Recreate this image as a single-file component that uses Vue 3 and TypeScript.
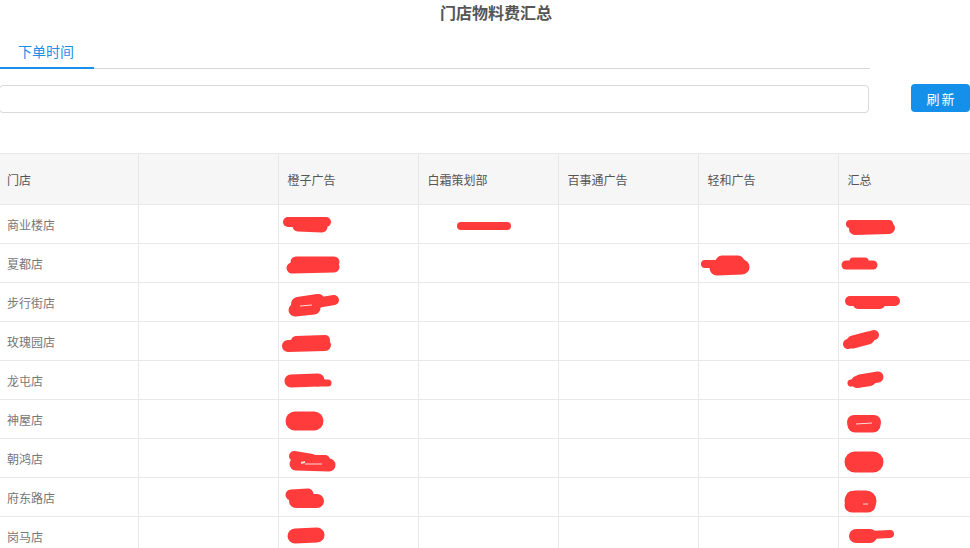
<script setup lang="ts">
interface Stroke { d: string; w: number }

const columns: string[] = ['门店', '', '橙子广告', '白霜策划部', '百事通广告', '轻和广告', '汇总']
const stores: string[] = ['商业楼店', '夏都店', '步行街店', '玫瑰园店', '龙屯店', '神屋店', '朝鸿店', '府东路店', '岗马店']
const blanks: string[] = ['', '', '', '', '', '']

const marks: Stroke[] = [
  { d: 'M288 222L326 222', w: 10 }, { d: 'M298 226L322 227', w: 11 },
  { d: 'M461 226L507 226', w: 8 },
  { d: 'M296 262L334 262', w: 11 }, { d: 'M292 268L334 267', w: 11 },
  { d: 'M705 264L716 264', w: 8 }, { d: 'M722 262L738 262', w: 13 }, { d: 'M717 268L742 267', w: 15 },
  { d: 'M295 310L314 308', w: 13 }, { d: 'M298 304L318 301', w: 14 }, { d: 'M316 303L334 300', w: 10 },
  { d: 'M288 346L325 345', w: 12 }, { d: 'M296 341L325 340', w: 10 },
  { d: 'M291 381L318 380', w: 13 }, { d: 'M318 383L328 383', w: 7 },
  { d: 'M295 421L314 421', w: 19 }, { d: 'M298 417L312 417', w: 10 },
  { d: 'M294 456L312 459', w: 10 }, { d: 'M296 464L329 465', w: 13 }, { d: 'M300 460L325 460', w: 10 },
  { d: 'M291 495L308 494', w: 11 }, { d: 'M296 501L317 501', w: 14 },
  { d: 'M295 536L317 535', w: 15 },
  { d: 'M850 224L889 224', w: 8 }, { d: 'M855 229L889 228', w: 12 },
  { d: 'M846 265L873 265', w: 9 }, { d: 'M853 261L865 261', w: 7 },
  { d: 'M850 301L895 301', w: 10 }, { d: 'M858 304L880 304', w: 10 },
  { d: 'M848 344L874 335', w: 10 }, { d: 'M853 342L868 338', w: 13 },
  { d: 'M851 383L860 382', w: 7 }, { d: 'M860 380L878 377', w: 11 }, { d: 'M857 382L870 380', w: 12 },
  { d: 'M854 422L874 422', w: 14 }, { d: 'M855 425L873 425', w: 15 },
  { d: 'M855 462L873 462', w: 21 },
  { d: 'M855 501L866 501', w: 21 }, { d: 'M852 497L858 497', w: 12 }, { d: 'M852 505L868 505', w: 15 },
  { d: 'M856 536L870 536', w: 14 }, { d: 'M870 535L890 534', w: 8 }
]

const slivers: Stroke[] = [
  { d: 'M301 463L305 462', w: 2 }, { d: 'M305 464L322 464', w: 1 },
  { d: 'M856 424L872 423', w: 1 }, { d: 'M863 504L868 504', w: 1 },
  { d: 'M300 306L312 305', w: 1 }
]
</script>

<template>
  <div class="page">
    <h1 class="title">门店物料费汇总</h1>
    <div class="tabs">
      <div class="tab">下单时间</div>
    </div>
    <div class="toolbar">
      <input class="search" type="text" />
      <button class="refresh" type="button">刷新</button>
    </div>
    <table class="grid">
      <thead>
        <tr>
          <th v-for="(c, i) in columns" :key="i">{{ c }}</th>
        </tr>
      </thead>
      <tbody>
        <tr v-for="s in stores" :key="s">
          <td>{{ s }}</td>
          <td v-for="(b, i) in blanks" :key="i">{{ b }}</td>
        </tr>
      </tbody>
    </table>
    <svg class="scribble" width="970" height="548" viewBox="0 0 970 548">
      <path
        v-for="(m, i) in marks"
        :key="i"
        :d="m.d"
        :stroke-width="m.w"
        fill="none"
        stroke="#ff3b3b"
        stroke-linecap="round"
      />
      <path
        v-for="(m, i) in slivers"
        :key="'s' + i"
        :d="m.d"
        :stroke-width="m.w"
        fill="none"
        stroke="#ffd9d9"
      />
    </svg>
  </div>
</template>

<style>
html, body { margin: 0; overflow: hidden; background: #fff; }
</style>

<style scoped>
.page {
  position: relative;
  width: 972px;
  height: 548px;
  margin-left: -2px;
  overflow: hidden;
  font-family: "Noto Sans CJK SC", "Liberation Sans", sans-serif;
}
.title {
  margin: 0;
  padding-left: 24px;
  font-size: 16px;
  line-height: 24px;
  font-weight: 700;
  text-align: center;
  color: #555;
}
.tabs {
  width: 872px;
  height: 45px;
  box-sizing: border-box;
  border-bottom: 1px solid #d9d9d9;
  display: flex;
  align-items: flex-end;
}
.tab {
  width: 96px;
  box-sizing: border-box;
  height: 34px;
  padding-left: 20px;
  margin-bottom: -1px;
  border-bottom: 2px solid #1890e8;
  font-size: 14px;
  line-height: 32px;
  color: #1890e8;
}
.toolbar {
  display: flex;
  align-items: flex-start;
  justify-content: space-between;
  margin-top: 15px;
}
.search {
  width: 870px;
  height: 28px;
  margin: 1px 0 0 1px;
  box-sizing: border-box;
  border: 1px solid #d9d9d9;
  border-radius: 4px;
  background: #fff;
  padding: 0;
}
.refresh {
  width: 59px;
  height: 28px;
  padding: 0 0 0 2px;
  border: 0;
  border-radius: 4px;
  background: #1490eb;
  color: #fff;
  font-family: inherit;
  font-size: 13px;
  letter-spacing: 2px;
}
.grid {
  width: 1000px;
  margin-top: 40px;
  border-collapse: collapse;
  table-layout: fixed;
}
.grid th,
.grid td {
  width: 140px;
  box-sizing: border-box;
  padding: 0 0 0 9px;
  border: 1px solid #e8e8e8;
  border-left: 0;
  text-align: left;
  font-size: 12px;
  font-weight: 400;
}
.grid th:last-child,
.grid td:last-child {
  width: auto;
  border-right: 0;
}
.grid th {
  height: 51px;
  background: #f6f6f6;
  color: #555;
}
.grid td {
  height: 39px;
  color: #777;
}
.scribble {
  position: absolute;
  left: 2px;
  top: 0;
  pointer-events: none;
}
</style>
